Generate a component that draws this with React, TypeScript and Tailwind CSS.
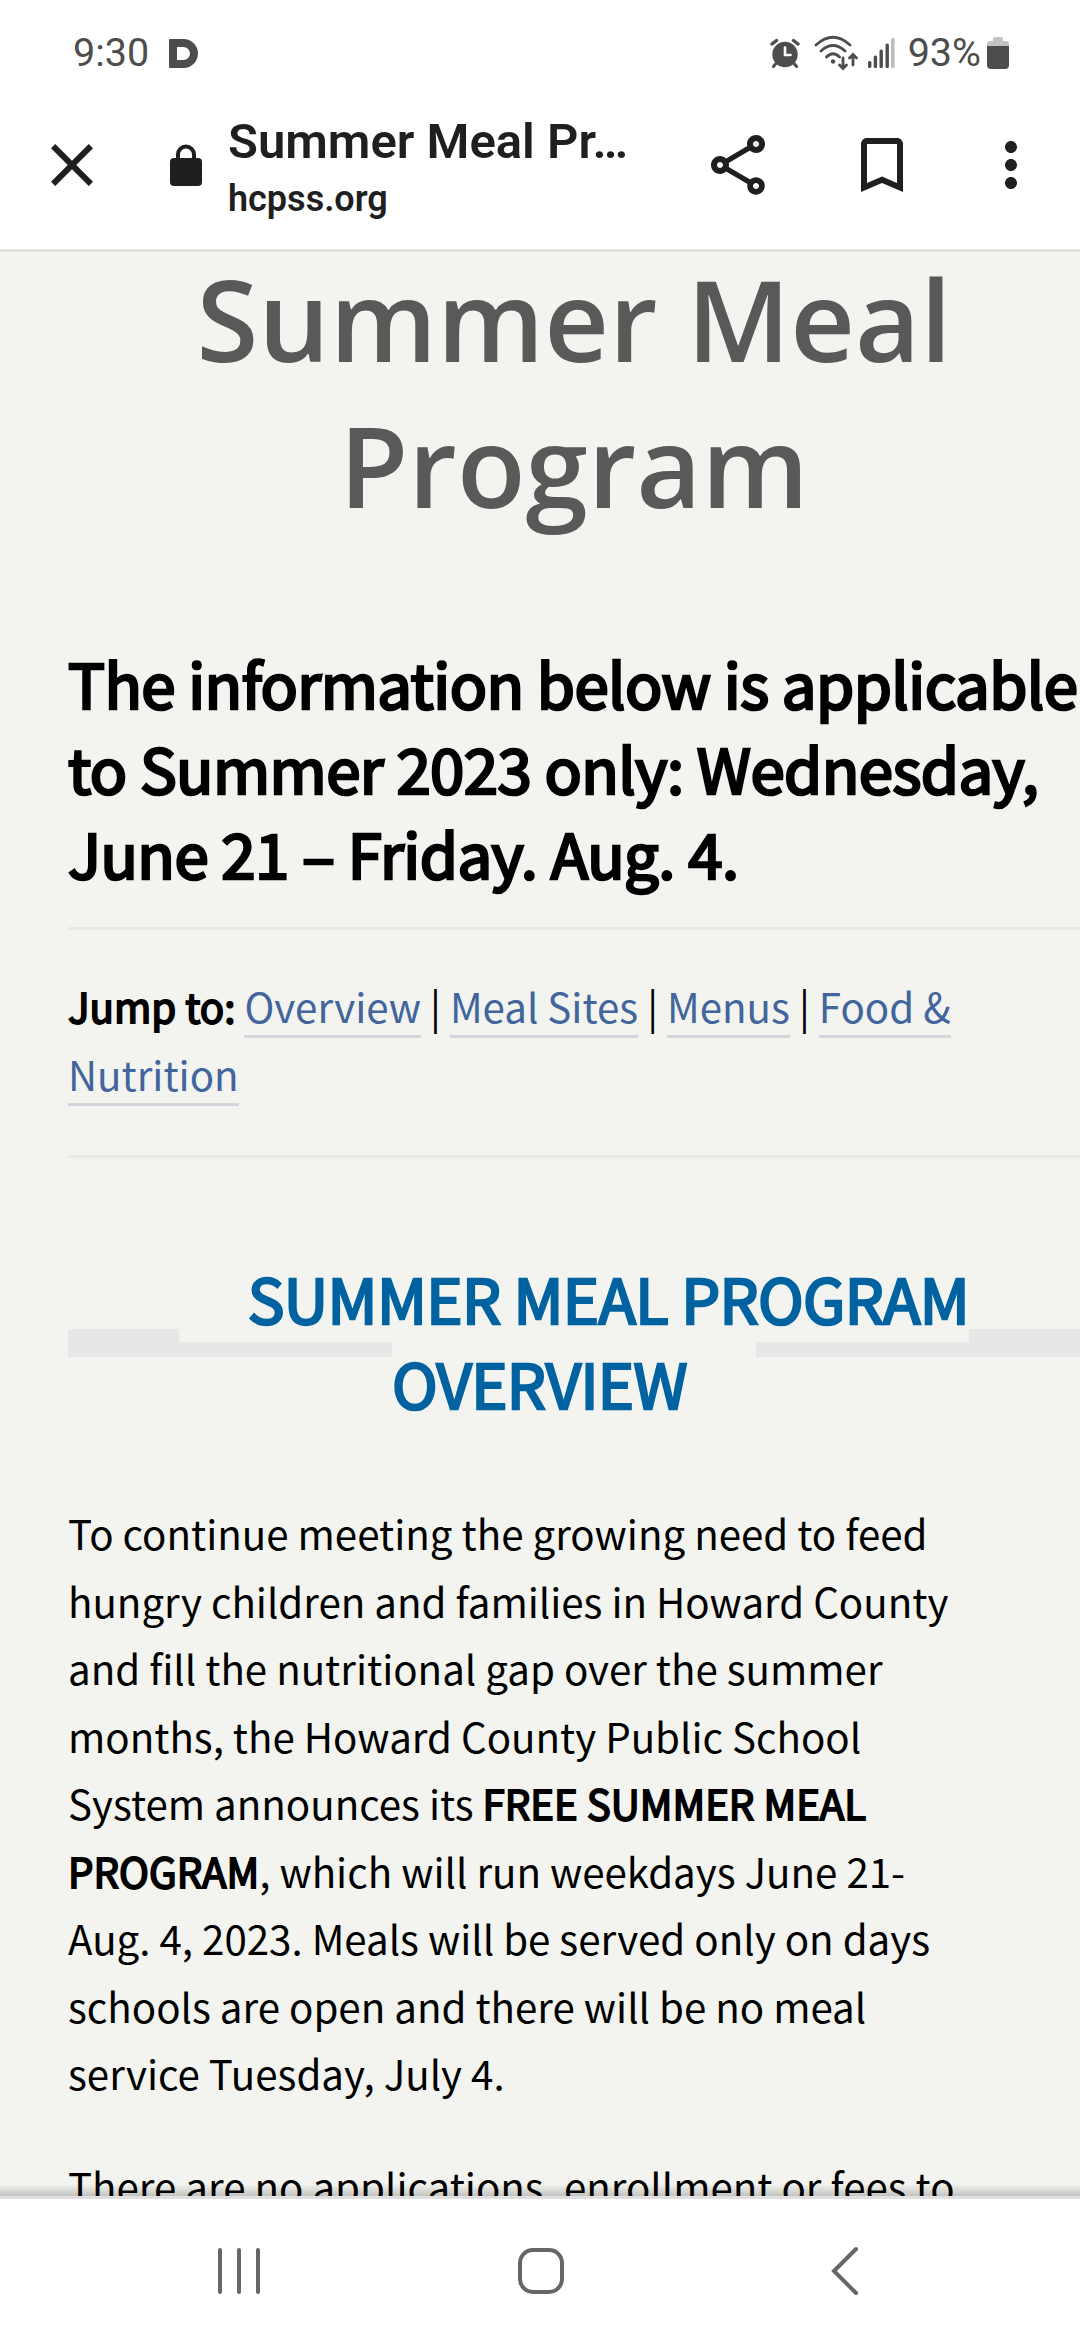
import type { ReactNode } from 'react'
import { MdClose, MdMoreVert, MdOutlineBookmarkBorder, MdOutlineShare } from 'react-icons/md'

const jumpLinks = ['Overview', 'Meal Sites', 'Menus']

function Strong({ children }: { children: ReactNode }) {
  return <strong className="font-normal [-webkit-text-stroke:1.8px_currentColor]">{children}</strong>
}

function JumpLink({ children }: { children: ReactNode }) {
  return <a className="text-[#41659c] shadow-[0_3px_0_#d5d5dc]">{children}</a>
}

function StatusBar() {
  return (
    <div className="flex h-[106px] items-center pl-[73px] pr-[71px] text-[#4d4d4d]">
      <span className="text-[39.5px] leading-none">9:30</span>
      <span className="ml-5 h-[29px] w-[29px] rounded-l-[1px] rounded-r-[15px] border-8 border-[#4d4d4d]" />
      <svg className="ml-auto h-[30px] w-[30px]" viewBox="0 0 30 30" fill="none" stroke="currentColor" strokeLinecap="round">
        <circle cx="15" cy="16.500" r="12.700" fill="currentColor" stroke="none" />
        <path d="M2 6L6.500 2.500M28 6L23.500 2.500" strokeWidth="3.400" />
        <path d="M5.500 26L3.500 28.500M24.500 26L26.500 28.500" strokeWidth="3" />
        <path d="M15 9.500V17H20.500" stroke="white" strokeWidth="2.600" />
      </svg>
      <svg className="ml-[14px] h-[36px] w-[45px]" viewBox="0 0 45 36" fill="none" stroke="currentColor" strokeWidth="2.800" strokeLinecap="round">
        <path d="M2 10Q19 -5.500 36 10M7 16Q19 5 31 16M12.500 22Q19 15.500 25.500 22" />
        <circle cx="19" cy="26.500" r="2.200" fill="currentColor" stroke="none" />
        <path d="M29 23V33M25.500 30L29 33.500L32.500 30M39 30V20M35.500 23L39 19.500L42.500 23" />
      </svg>
      <svg className="ml-[8px] h-[30px] w-[29px]" viewBox="0 0 29 30" fill="currentColor">
        <rect x="1" y="23" width="3.400" height="7" rx="1.500" />
        <rect x="6.700" y="17.500" width="3.400" height="12.500" rx="1.500" />
        <rect x="12.500" y="11.500" width="3.400" height="18.500" rx="1.500" />
        <rect x="18.500" y="5.500" width="3.400" height="24.500" rx="1.500" />
        <rect x="24" y="0" width="3.600" height="30" rx="1.500" fill="#bdbdbd" />
      </svg>
      <span className="ml-[12px] text-[39.5px] leading-none">93%</span>
      <svg className="ml-[6px] h-[32px] w-[22px]" viewBox="0 0 22 32">
        <path d="M6 2Q6 0 8 0H14Q16 0 16 2V4H19Q22 4 22 8V12H0V8Q0 4 3 4H6Z" fill="#c4c4c4" />
        <path d="M0 9H22V28Q22 32 18 32H4Q0 32 0 28Z" fill="currentColor" />
      </svg>
    </div>
  )
}

function BrowserBar() {
  return (
    <div className="flex h-[143px] items-center pb-[25px] text-[#1f1f1f]">
      <MdClose className="ml-9 h-[72px] w-[72px] shrink-0" />
      <svg className="ml-[62px] h-[42px] w-8 shrink-0" viewBox="0 0 32 42">
        <path d="M8 17V10.500A8 8 0 0 1 24 10.500V17" fill="none" stroke="currentColor" strokeWidth="4" />
        <rect y="14" width="32" height="28" rx="4" fill="currentColor" />
      </svg>
      <div className="ml-[26px] flex w-[466px] flex-col pt-[10px]">
        <span className="text-[49px] font-semibold leading-[58px]">Summer Meal Pr…</span>
        <span className="text-[36px] font-semibold leading-[56px]">hcpss.org</span>
      </div>
      <MdOutlineShare className="ml-[8px] h-[72px] w-[72px] shrink-0" />
      <MdOutlineBookmarkBorder className="ml-[72px] h-[72px] w-[72px] shrink-0" />
      <MdMoreVert className="ml-[57px] h-[72px] w-[72px] shrink-0" />
    </div>
  )
}

function Article() {
  return (
    <main className="relative h-[1944px] overflow-hidden whitespace-nowrap bg-[#f3f4ef] pl-[68px] font-['Noto_Sans_CJK_SC','Noto_Sans',sans-serif] text-[40.25px] leading-[67.5px] text-black">
      <h1 className="-mt-[6px] text-center font-['Open_Sans',sans-serif] text-[112.4px] font-semibold leading-[146px] text-[#595959]">
        Summer Meal
        <br />
        Program
      </h1>

      <h3 className="mt-[102px] text-[61.7px] leading-[85px] tracking-[-0.55px] [-webkit-text-stroke:2.7px_currentColor]">
        The information below is applicable
        <br />
        to Summer 2023 only: Wednesday,
        <br />
        June 21 – Friday. Aug. 4.
      </h3>

      <hr className="mt-[32px] border-t-[3px] border-[#e8e8e6]" />
      <p className="mt-[42px]">
        <Strong>Jump to:</Strong>{' '}
        {jumpLinks.map((link) => (
          <span key={link}>
            <JumpLink>{link}</JumpLink> |{' '}
          </span>
        ))}
        <JumpLink>
          Food &amp;
          <br />
          Nutrition
        </JumpLink>
      </p>
      <hr className="mt-[48px] border-t-[3px] border-[#e8e8e6]" />

      <div className="relative mt-[97px] text-center">
        <div className="absolute left-0 right-0 top-[74px] h-7 bg-[#e7e7e7]" />
        <h2 className="relative text-[61.5px] leading-[85px] tracking-[-0.6px] text-[#0062a0] [-webkit-text-stroke:2.5px_currentColor]">
          <span className="bg-[#f3f4ef] px-[69px]">
            SUMMER MEAL PROGRAM
            <br />
            OVERVIEW
          </span>
        </h2>
      </div>

      <p className="mt-[74px]">
        To continue meeting the growing need to feed
        <br />
        hungry children and families in Howard County
        <br />
        and fill the nutritional gap over the summer
        <br />
        months, the Howard County Public School
        <br />
        System announces its <Strong>FREE SUMMER MEAL</Strong>
        <br />
        <Strong>PROGRAM</Strong>, which will run weekdays June 21-
        <br />
        Aug. 4, 2023. Meals will be served only on days
        <br />
        schools are open and there will be no meal
        <br />
        service Tuesday, July 4.
      </p>
      <p className="mt-[45px]">There are no applications, enrollment or fees to</p>

      <div className="absolute inset-x-0 bottom-0 h-3 bg-gradient-to-b from-transparent to-black/20" />
    </main>
  )
}

function NavBar() {
  return (
    <nav className="flex h-[144px] border-t-[3px] border-[#e0e0e0] bg-white pl-[216px] pt-[47px] text-[#666]">
      <svg className="h-[50px] w-[46px]" viewBox="0 0 46 50" stroke="currentColor" strokeWidth="4" strokeLinecap="round">
        <path d="M4 4V46M23 4V46M42 4V46" />
      </svg>
      <svg className="ml-[254px] h-[50px] w-[50px]" viewBox="0 0 50 50" fill="none" stroke="currentColor" strokeWidth="4">
        <rect x="4" y="4" width="42" height="42" rx="13" />
      </svg>
      <svg className="ml-[264px] h-[50px] w-[30px]" viewBox="0 0 30 50" fill="none" stroke="currentColor" strokeWidth="4" strokeLinecap="round">
        <path d="M26 3L4 25L26 47" />
      </svg>
    </nav>
  )
}

export default function App() {
  return (
    <div className="h-[2340px] w-[1080px] overflow-hidden bg-white font-['Roboto',sans-serif]">
      <StatusBar />
      <BrowserBar />
      <div className="h-[3px] bg-[#e0e2de]" />
      <Article />
      <NavBar />
    </div>
  )
}
